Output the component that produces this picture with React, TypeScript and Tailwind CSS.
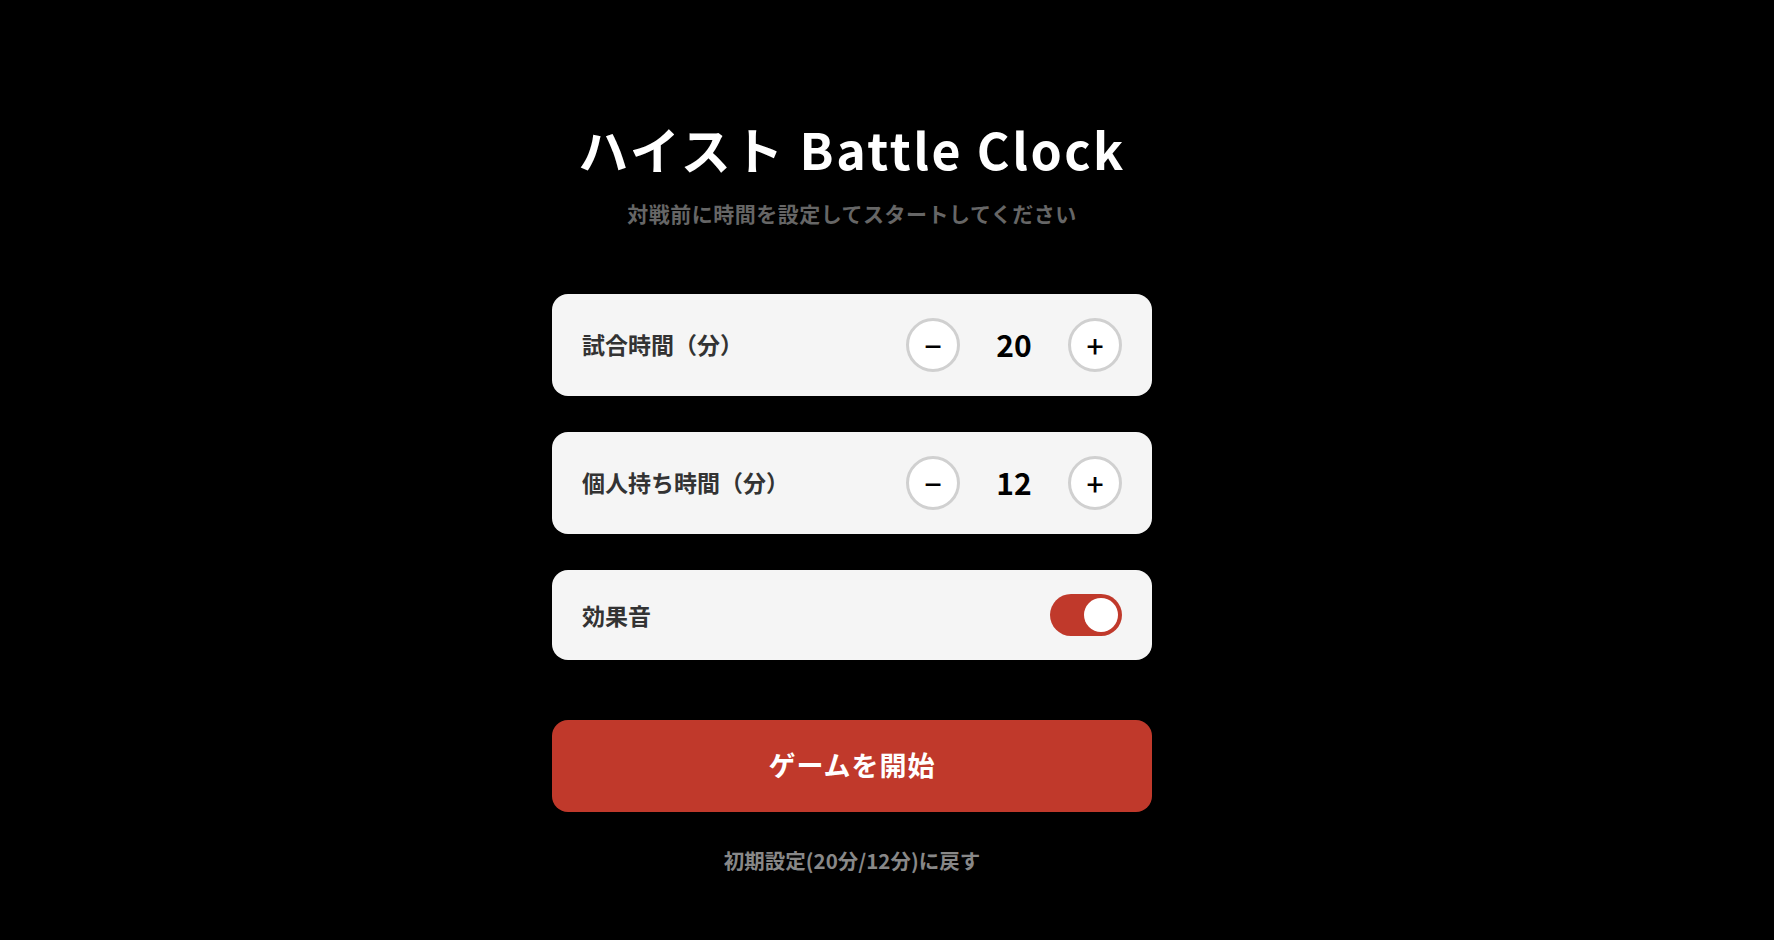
import { useState } from 'react'

const font = { fontFamily: '"Noto Sans CJK JP", "Noto Sans", sans-serif' }

function Stepper({ label, value, onChange }: { label: string; value: number; onChange: (v: number) => void }) {
  return (
    <div className="flex items-center justify-between rounded-2xl bg-[#f5f5f5] px-[30px] py-6">
      <span className="text-[23px] font-bold text-[#333]">{label}</span>
      <div className="flex items-center gap-6">
        <button
          onClick={() => onChange(Math.max(1, value - 1))}
          className="flex h-[54px] w-[54px] items-center justify-center rounded-full border-[3px] border-[#d0d0d0] bg-white text-[30px] font-medium leading-none text-black"
        >
          −
        </button>
        <span className="w-[60px] text-center text-[30px] font-bold text-black">{value}</span>
        <button
          onClick={() => onChange(value + 1)}
          className="flex h-[54px] w-[54px] items-center justify-center rounded-full border-[3px] border-[#d0d0d0] bg-white text-[30px] font-medium leading-none text-black"
        >
          +
        </button>
      </div>
    </div>
  )
}

export default function App() {
  const [match, setMatch] = useState(20)
  const [personal, setPersonal] = useState(12)
  const [sound, setSound] = useState(true)

  return (
    <div className="flex min-h-screen flex-col items-center bg-black pr-[70px]" style={font}>
      <h1 className="mt-[116px] text-[50px] font-bold leading-[64px] tracking-[2.5px] text-white">ハイスト Battle Clock</h1>
      <p className="mt-[18px] text-[21px] font-bold leading-[31.5px] tracking-[0.5px] text-[#666]">
        対戦前に時間を設定してスタートしてください
      </p>

      <div className="mt-[64px] flex w-[600px] flex-col gap-9">
        <Stepper label="試合時間（分）" value={match} onChange={setMatch} />
        <Stepper label="個人持ち時間（分）" value={personal} onChange={setPersonal} />
        <div className="flex items-center justify-between rounded-2xl bg-[#f5f5f5] px-[30px] py-6">
          <span className="text-[23px] font-bold leading-[42px] text-[#333]">効果音</span>
          <button
            onClick={() => setSound(!sound)}
            className={`flex h-[42px] w-[72px] items-center rounded-full px-1 ${sound ? 'justify-end bg-[#c0392b]' : 'justify-start bg-[#bbb]'}`}
          >
            <span className="h-[34px] w-[34px] rounded-full bg-white" />
          </button>
        </div>
      </div>

      <button className="mt-[60px] h-[92px] w-[600px] rounded-2xl bg-[#c0392b] text-[27px] font-bold tracking-[1px] text-white">
        ゲームを開始
      </button>
      <button
        onClick={() => {
          setMatch(20)
          setPersonal(12)
        }}
        className="mt-[33px] text-[20.5px] font-bold leading-[31px] text-[#888]"
      >
        初期設定(20分/12分)に戻す
      </button>
    </div>
  )
}
